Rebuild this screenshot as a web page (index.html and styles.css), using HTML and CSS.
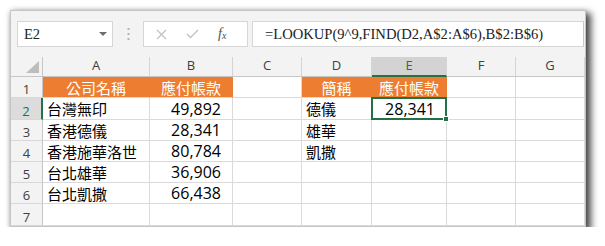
FILE: index.html
```html
<!DOCTYPE html>
<html>
<head>
<meta charset="utf-8">
<link rel="stylesheet" href="styles.css">
</head>
<body>
<div class="window">
  <div class="fbar">
    <div class="namebox">
      <span class="nb-text">E2</span>
      <svg class="nb-arrow" width="8" height="5" viewBox="0 0 8 5"><polygon points="0,0 8,0 4,4" fill="#6d6d6d"/></svg>
    </div>
    <div class="grip">
      <svg width="3" height="13" viewBox="0 0 3 13"><rect x="0.5" y="0" width="2" height="2" fill="#b4b4b4"/><rect x="0.5" y="5" width="2" height="2" fill="#b4b4b4"/><rect x="0.5" y="10" width="2" height="2" fill="#b4b4b4"/></svg>
    </div>
    <div class="btns">
      <svg class="btn-x" width="11" height="11" viewBox="0 0 11 11"><path d="M1 1 L10 10 M10 1 L1 10" stroke="#c2c2c2" stroke-width="1.3" fill="none"/></svg>
      <svg class="btn-ok" width="13" height="10" viewBox="0 0 13 10"><path d="M1 5 L4.5 8.5 L12 1" stroke="#c2c2c2" stroke-width="1.4" fill="none"/></svg>
      <span class="fx"><i>f</i><sub>x</sub></span>
    </div>
    <div class="formula">=LOOKUP(9^9,FIND(D2,A$2:A$6),B$2:B$6)</div>
  </div>
  <div class="sheet">
    <div class="corner"><svg width="13" height="12" viewBox="0 0 13 12"><polygon points="13,0 13,12 0,12" fill="#bdbdbd"/></svg></div>
    <div class="ch">A</div><div class="ch">B</div><div class="ch">C</div><div class="ch">D</div><div class="ch ch-sel">E</div><div class="ch">F</div><div class="ch">G</div>

    <div class="rh">1</div>
    <div class="c hd">公司名稱</div><div class="c hd">應付帳款</div><div class="c"></div><div class="c hd">簡稱</div><div class="c hd">應付帳款</div><div class="c"></div><div class="c"></div>

    <div class="rh rh-sel">2</div>
    <div class="c tx">台灣無印</div><div class="c num">49,892</div><div class="c"></div><div class="c tx">德儀</div><div class="c num sel">28,341</div><div class="c"></div><div class="c"></div>

    <div class="rh">3</div>
    <div class="c tx">香港德儀</div><div class="c num">28,341</div><div class="c"></div><div class="c tx">雄華</div><div class="c"></div><div class="c"></div><div class="c"></div>

    <div class="rh">4</div>
    <div class="c tx">香港施華洛世</div><div class="c num">80,784</div><div class="c"></div><div class="c tx">凱撒</div><div class="c"></div><div class="c"></div><div class="c"></div>

    <div class="rh">5</div>
    <div class="c tx">台北雄華</div><div class="c num">36,906</div><div class="c"></div><div class="c"></div><div class="c"></div><div class="c"></div><div class="c"></div>

    <div class="rh">6</div>
    <div class="c tx">台北凱撒</div><div class="c num">66,438</div><div class="c"></div><div class="c"></div><div class="c"></div><div class="c"></div><div class="c"></div>

    <div class="rh">7</div>
    <div class="c"></div><div class="c"></div><div class="c"></div><div class="c"></div><div class="c"></div><div class="c"></div><div class="c"></div>
  </div>
</div>
</body>
</html>
```

FILE: styles.css
```css
html, body {
  margin: 0;
  padding: 0;
  background: #ffffff;
}

.window {
  margin: 10px 0 0 10px;
  width: 574px;
  height: 215px;
  border: 1px solid #c4c4c4;
  background: #f3f3f3;
  box-shadow: 4px 4px 7px 1px rgba(0, 0, 0, 0.7), 0 0 5px rgba(0, 0, 0, 0.15);
  display: flex;
  flex-direction: column;
  overflow: hidden;
}

.fbar {
  height: 46px;
  box-sizing: border-box;
  padding: 10px 0 0 6px;
  display: flex;
  align-items: flex-start;
  background: #f3f3f3;
}

.namebox {
  width: 96px;
  height: 26px;
  box-sizing: border-box;
  border: 1px solid #d6d6d6;
  background: #ffffff;
  display: flex;
  align-items: center;
  justify-content: space-between;
  padding: 0 5px 0 6px;
}

.nb-text {
  font-family: "Liberation Serif", serif;
  font-size: 14.5px;
  color: #222;
}

.nb-arrow {
  margin-top: 1px;
}

.grip {
  width: 30px;
  height: 26px;
  display: flex;
  align-items: center;
  justify-content: center;
}

.btns {
  width: 105px;
  height: 26px;
  box-sizing: border-box;
  border: 1px solid #d6d6d6;
  background: #ffffff;
  display: flex;
  align-items: center;
  padding-left: 12px;
}

.btn-x {
  margin-right: 19px;
}

.btn-ok {
  margin-right: 19px;
}

.fx {
  font-family: "Liberation Serif", serif;
  font-size: 14px;
  color: #505050;
  line-height: 1;
}

.fx i {
  font-style: italic;
}

.fx sub {
  font-size: 10px;
  font-style: italic;
  vertical-align: -1px;
}

.formula {
  flex: 1;
  height: 26px;
  box-sizing: border-box;
  margin-left: 4px;
  margin-right: 1px;
  border: 1px solid #d6d6d6;
  border-right-color: #c8c8c8;
  background: #ffffff;
  font-family: "Liberation Serif", serif;
  font-size: 14.6px;
  color: #222;
  line-height: 24px;
  padding-left: 12px;
  white-space: nowrap;
  overflow: hidden;
}

.sheet {
  display: grid;
  grid-template-columns: 32px 107px 83px 69px 70px 75px 69px 69px;
  grid-template-rows: 20px 21px 22px 21px 21px 21px 21px 22px;
  background: #ffffff;
}

.corner {
  background: #f3f3f3;
  border-right: 1px solid #c6c6c6;
  border-bottom: 1px solid #c6c6c6;
  display: flex;
  align-items: flex-end;
  justify-content: flex-end;
  padding: 0 3px 3px 0;
}

.ch {
  background: #f3f3f3;
  border-right: 1px solid #d4d4d4;
  border-bottom: 1px solid #c6c6c6;
  display: flex;
  align-items: center;
  justify-content: center;
  padding-bottom: 3px;
  font-family: "Open Sans", sans-serif;
  font-size: 13px;
  color: #404040;
}

.ch-sel {
  background: #d3d3d3;
  border-bottom: 2px solid #217346;
  color: #217346;
}

.rh {
  background: #f3f3f3;
  border-right: 1px solid #c6c6c6;
  border-bottom: 1px solid #d8d8d8;
  display: flex;
  align-items: center;
  justify-content: center;
  padding-top: 4px;
  font-family: "Open Sans", sans-serif;
  font-size: 13px;
  color: #404040;
}

.rh-sel {
  background: #dcdcdc;
  border-right: 2px solid #217346;
  color: #217346;
}

.c {
  border-right: 1px solid #dadada;
  border-bottom: 1px solid #dadada;
  display: flex;
  align-items: center;
  font-family: "Noto Sans CJK TC", sans-serif;
  font-size: 15px;
  color: #000;
  white-space: nowrap;
}

.hd {
  background: #ed7d31;
  border-right-color: #ed7d31;
  color: #ffffff;
  justify-content: center;
}

.tx {
  padding-left: 4px;
}

.num {
  justify-content: flex-end;
  padding-right: 11px;
  font-family: "Open Sans", sans-serif;
  font-size: 16px;
}

.sel {
  position: relative;
}

.sel::after {
  content: "";
  position: absolute;
  left: -1px;
  top: -1px;
  right: -1px;
  bottom: -1px;
  border: 2px solid #217346;
}

.sel::before {
  content: "";
  position: absolute;
  right: -3px;
  bottom: -3px;
  width: 4px;
  height: 4px;
  background: #217346;
  border: 1px solid #ffffff;
  z-index: 2;
}
```
